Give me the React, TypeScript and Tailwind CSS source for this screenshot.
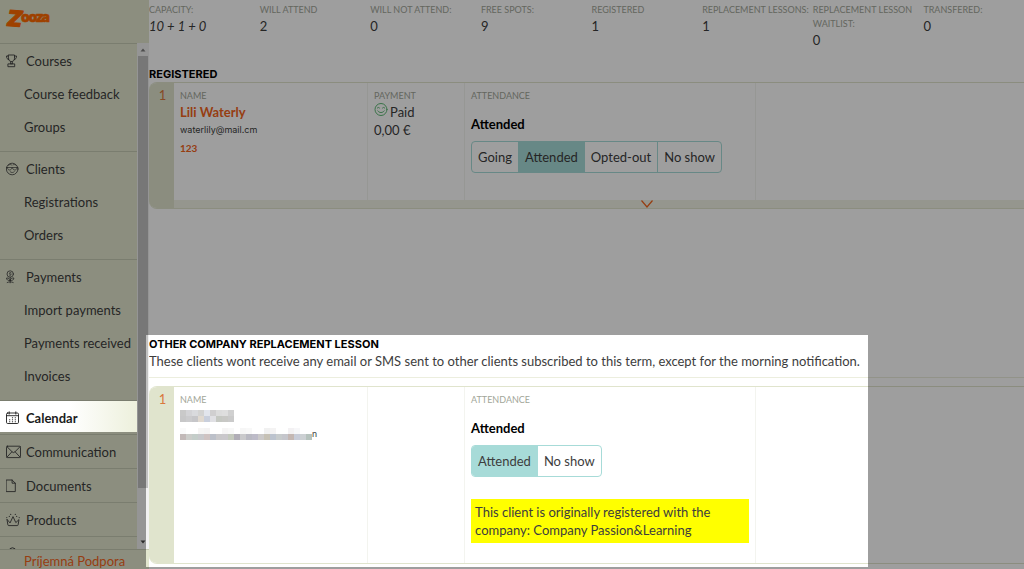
import type { ReactNode } from 'react';
import clsx from 'clsx';

const STATS = [
  { label: 'CAPACITY:', value: '10 + 1 + 0', italic: true },
  { label: 'WILL ATTEND', value: '2' },
  { label: 'WILL NOT ATTEND:', value: '0' },
  { label: 'FREE SPOTS:', value: '9' },
  { label: 'REGISTERED', value: '1' },
  { label: 'REPLACEMENT LESSONS:', value: '1' },
  { label: 'REPLACEMENT LESSON WAITLIST:', value: '0' },
  { label: 'TRANSFERED:', value: '0' },
];

const NAV_GROUPS = [
  { label: 'Courses', icon: <TrophyIcon />, items: ['Course feedback', 'Groups'] },
  { label: 'Clients', icon: <FaceIcon />, items: ['Registrations', 'Orders'] },
  { label: 'Payments', icon: <MoneyPlantIcon />, items: ['Import payments', 'Payments received', 'Invoices'] },
];

const NAV_LINKS = [
  { label: 'Communication', icon: <EnvelopeIcon /> },
  { label: 'Documents', icon: <PageIcon /> },
  { label: 'Products', icon: <CrownIcon /> },
];

// colours of the masked client name and e-mail, one per 6px block
const NAME_BLOCKS = [
  ['#c9c9c9', '#d3d3d6', '#d9dadd', '#d3d3d2', '#e2e5ec', '#d0cfd0', '#dcdcdc', '#dedede', '#d0d0d0'],
  ['#c7c7c8', '#cbcbcd', '#c6c6c9', '#e0d9d0', '#c9cfdc', '#e0e0e4', '#c5c8c2', '#c8c8c5', '#cacaca'],
];
const EMAIL_BLOCKS = [
  ['#fafafa', '#ffffff', '#ffffff', '#f6f5f4', '#f4f3f3', '#ffffff', '#ffffff', '#f6f5f5', '#f8f8f8', '#ffffff', '#f6f6f6', '#f8f8f8', '#ffffff', '#ffffff', '#f1f1f1', '#f4f3f3', '#ffffff', '#ffffff', '#f3f1f3', '#f7f7f9', '#ffffff', '#ffffff'],
  ['#c2b9b8', '#cccdca', '#c4cdc9', '#c8c9cc', '#cfc3c2', '#bcc0c9', '#c9c8ca', '#cac8cc', '#c4c9bd', '#b0adb6', '#c9c9cb', '#b9b9c2', '#bdbbc8', '#cbc9c9', '#c6c1b5', '#bcc3ce', '#c7cbcc', '#c5c6cc', '#c4b7b3', '#c8ccd8', '#ccd0d3', '#b6c2bd'],
];

function Icon({ children }: { children: ReactNode }) {
  return (
    <svg viewBox="0 0 16 16" className="h-4 w-4 shrink-0" fill="none" stroke="currentColor" strokeLinecap="round" strokeLinejoin="round" aria-hidden="true">
      {children}
    </svg>
  );
}

function TrophyIcon() {
  return (
    <Icon>
      <path d="M2.500 2h6v3.200c0 2-1 3.300-3 3.300s-3-1.300-3-3.300zM2.500 3H.5c0 2.200.8 3.400 2.300 3.700M8.500 3h2c0 2.200-.8 3.400-2.300 3.700M4.900 8.500l-.5 2.300h2.200l-.5-2.300M2.300 10.900h6.400v2.800H2.300z" strokeWidth=".9" />
    </Icon>
  );
}

function FaceIcon() {
  return (
    <Icon>
      <circle cx="6.200" cy="8" r="5.800" strokeWidth=".8" />
      <path d="M.5 6.500h11.400M1.400 6.600c.2 1.700 1 2.400 2.200 2.400s2-.8 2.200-2.200h.8C6.800 8.200 7.600 9 8.800 9s2-.7 2.200-2.400M4.100 10.700c1.200 1.200 3 1.200 4.200 0M2.400 4.200c1-.8 2-.9 3.100-.3M6.900 3.900c1.100-.6 2.100-.5 3.100.3" strokeWidth=".7" />
    </Icon>
  );
}

function MoneyPlantIcon() {
  return (
    <Icon>
      <circle cx="4.200" cy="5" r="3.200" strokeWidth=".8" />
      <path d="M5.100 3.800c-.8-.5-1.700-.2-1.700.4 0 .8 1.700.6 1.700 1.500 0 .7-1.100.8-1.800.3M4.200 8.200v5.600M4.200 11.400C4 9.600 2.600 8.800.5 9c.2 2 1.500 2.800 3.700 2.400zM4.200 11.400C4.400 9.600 5.800 8.800 7.900 9c-.2 2-1.500 2.800-3.700 2.400zM1.200 13.500c2-.9 4-.9 6 0" strokeWidth=".8" />
    </Icon>
  );
}

function CalendarIcon() {
  return (
    <Icon>
      <rect x=".5" y="3" width="12" height="10.500" rx="1.200" strokeWidth=".9" />
      <path d="M.5 5.700h12M3.200 1.800v2.300M9.800 1.800v2.300" strokeWidth=".9" />
      <path d="M6.400 7.800h.2M9.200 7.800h.2M3.600 9.800h.2M6.400 9.800h.2M9.200 9.800h.2M3.600 11.700h.2M6.400 11.700h.2M9.200 11.700h.2" strokeWidth="1.100" />
    </Icon>
  );
}

function EnvelopeIcon() {
  return (
    <Icon>
      <rect x=".5" y="2.200" width="14" height="11.400" rx="1" strokeWidth=".9" />
      <path d="M.9 2.600l5.600 5.600c.6.600 1.500.6 2.100 0L14.100 2.600M.9 13.200l5-5.400M14.100 13.200l-5-5.400" strokeWidth=".9" />
    </Icon>
  );
}

function PageIcon() {
  return (
    <Icon>
      <path d="M.5 2h5.600l3.200 3.200V13.600H.5zM6.100 2v3.200h3.200" strokeWidth=".9" />
    </Icon>
  );
}

function CrownIcon() {
  return (
    <Icon>
      <path d="M1 7.600l.9 5.300c.1.500.4.7.9.700h8.400c.5 0 .8-.2.9-.7l.9-5.300-3.200 3-2.800-6-2.800 6z" strokeWidth=".9" />
      <path d="M.8 5.500v.1M3.300 4.400v.1M4.700 2.300v.1M9.300 2.300v.1M10.700 4.400v.1M13.200 5.500v.1" strokeWidth="1.100" />
    </Icon>
  );
}

function PersonIcon() {
  return (
    <Icon>
      <circle cx="6.500" cy="5" r="3.200" />
      <path d="M1.500 14c.4-3 2.200-5 5-5s4.600 2 5 5" />
    </Icon>
  );
}

function Logo() {
  return (
    <svg viewBox="0 0 52 28" className="h-7 w-[52px]" fill="#ff6a00" stroke="#ff6a00" strokeLinejoin="round" role="img" aria-label="Zooza">
      <g fontFamily="Inter, sans-serif" fontWeight="900">
        <text x="3" y="20" fontSize="22" fontStyle="italic" strokeWidth="1" transform="rotate(4 8 12)">Z</text>
        <text x="17 24.500 31.500 37.500" y="16" fontSize="14" strokeWidth=".5">ooza</text>
      </g>
    </svg>
  );
}

function SmileIcon() {
  return (
    <svg viewBox="0 0 14 14" className="h-3.5 w-3.5" fill="none" stroke="#5cb874" strokeLinecap="round" aria-hidden="true">
      <circle cx="7" cy="6.500" r="6" />
      <path d="M3.300 4.900q1-1.200 2.200 0M8.500 4.900q1-1.200 2.200 0M3.800 7.900c1.500 2.300 4.900 2.300 6.400 0" />
    </svg>
  );
}

function Mosaic({ rows, label }: { rows: string[][]; label: string }) {
  return (
    <svg width={rows[0].length * 6} height={rows.length * 6} shapeRendering="crispEdges" role="img" aria-label={label}>
      {rows.map((row, r) =>
        row.map((color, c) => <rect key={`${r}-${c}`} x={c * 6} y={r * 6} width="6" height="6" fill={color} />),
      )}
    </svg>
  );
}

function Sidebar() {
  return (
    <aside className="flex h-screen w-[149px] shrink-0 flex-col overflow-hidden bg-[#e2e6ce]">
      <a href="#" className="flex h-[43px] shrink-0 items-start pt-1.5 pl-1">
        <Logo />
      </a>
      <div className="flex min-h-0 flex-1">
        <nav className="min-w-0 flex-1 overflow-hidden">
          {NAV_GROUPS.map((group) => (
            <div key={group.label} className="border-t border-[#c6cab3] pb-2">
              <a href="#" className="flex h-[33px] items-center gap-1 pl-1.5">
                {group.icon}
                {group.label}
              </a>
              {group.items.map((item) => (
                <a key={item} href="#" className="flex h-[33px] items-center pl-6 whitespace-nowrap">
                  {item}
                </a>
              ))}
            </div>
          ))}
          <div className="border-t border-[#c6cab3] pb-0.5">
            <a
              href="#"
              aria-current="page"
              className="relative z-20 flex h-[31px] items-center gap-1 bg-linear-to-r from-white from-50% to-[#edf0dc] pt-0.5 pl-1.5 font-bold text-[#1c1c1c]"
            >
              <CalendarIcon />
              Calendar
            </a>
          </div>
          {NAV_LINKS.map((link) => (
            <a key={link.label} href="#" className="flex h-[34px] items-center gap-1 border-t border-[#c6cab3] pl-1.5">
              {link.icon}
              {link.label}
            </a>
          ))}
          <a href="#" aria-label="Account" className="flex h-[34px] items-center border-t border-[#c6cab3] pl-1.5">
            <PersonIcon />
          </a>
        </nav>
        <div className="flex w-3 shrink-0 flex-col items-center bg-[#f1f1f1]" aria-hidden="true">
          <svg viewBox="0 0 12 13" className="h-[13px] w-3 shrink-0" fill="#7d7d7d">
            <path d="M3.500 8.500L6 5.500l2.500 3z" />
          </svg>
          <div className="w-2.5 flex-1 bg-[#c1c1c1]" />
          <div className="h-12" />
          <svg viewBox="0 0 12 13" className="h-[13px] w-3 shrink-0" fill="#454545">
            <path d="M3.500 4.500L6 7.500l2.500-3z" />
          </svg>
        </div>
      </div>
      <a href="#" className="h-5 shrink-0 border-t border-[#c6cab3] pt-[3px] pl-6 leading-4 whitespace-nowrap text-[#f2641c]">
        Príjemná Podpora
      </a>
    </aside>
  );
}

function SectionTitle({ children }: { children: ReactNode }) {
  return <h2 className="font-[Inter,sans-serif] text-[11px] leading-4 font-bold text-black">{children}</h2>;
}

function CellLabel({ children }: { children: ReactNode }) {
  return <p className="text-[9px] leading-[14px] text-[#a2a699]">{children}</p>;
}

function Segments({ options, active }: { options: string[]; active: string }) {
  return (
    <div className="mt-2 inline-flex h-8 divide-x divide-[#a7dbd8] overflow-hidden rounded border border-[#a7dbd8]">
      {options.map((option) => (
        <button
          key={option}
          type="button"
          aria-pressed={option === active}
          className={clsx('px-1.5', option === active && 'bg-[#a7dbd8]')}
        >
          {option}
        </button>
      ))}
    </div>
  );
}

function ClientCard({ number, name, payment, attendance, footer }: {
  number: number;
  name: ReactNode;
  payment?: ReactNode;
  attendance: ReactNode;
  footer?: ReactNode;
}) {
  return (
    <article className="-mr-24 flex overflow-hidden rounded-lg border-y border-[#e0e4cd]">
      <div className="w-[25px] shrink-0 bg-[#e0e4cd] pt-[3px] pl-0.5 text-center leading-[18px] text-[#d9783c]">{number}</div>
      <div className="flex flex-1 flex-col">
        <div className="grid flex-1 grid-cols-[8fr_4fr_12fr_15fr] divide-x divide-[#f3f4ef] *:min-w-0 *:px-1.5 *:pt-[6px]">
          <div>
            <CellLabel>NAME</CellLabel>
            {name}
          </div>
          <div>{payment}</div>
          <div>
            <CellLabel>ATTENDANCE</CellLabel>
            <p className="mt-3 leading-[18px] font-bold text-black">Attended</p>
            {attendance}
          </div>
          <div />
        </div>
        {footer}
      </div>
    </article>
  );
}

export default function App() {
  return (
    <div className="relative flex min-h-screen overflow-hidden bg-white font-[Lato,sans-serif] text-[13px] leading-[18px] text-[#3d3d3d]">
      <Sidebar />

      <main className="min-w-0 flex-1 overflow-hidden pt-[3px]">
        <dl className="-mr-2.5 grid min-h-[63px] grid-cols-8">
          {STATS.map((stat) => (
            <div key={stat.label}>
              <dt className="text-[9px] leading-[14px] text-[#a2a699]">{stat.label}</dt>
              <dd className={clsx(stat.italic && 'italic')}>{stat.value}</dd>
            </div>
          ))}
        </dl>

        <section>
          <SectionTitle>REGISTERED</SectionTitle>
          <ClientCard
            number={1}
            name={
              <>
                <a href="#" className="block font-bold text-[#f2641c]">Lili Waterly</a>
                <p className="font-[Inter,sans-serif] text-[9px] leading-[18px]">waterlily@mail.cm</p>
                <a href="#" className="block text-[10px] leading-[18px] font-bold text-[#f2641c]">123</a>
              </>
            }
            payment={
              <>
                <CellLabel>PAYMENT</CellLabel>
                <p className="flex gap-0.5">
                  <SmileIcon />
                  Paid
                </p>
                <p>0,00 €</p>
              </>
            }
            attendance={
              <div className="pb-[27px]">
                <Segments options={['Going', 'Attended', 'Opted-out', 'No show']} active="Attended" />
              </div>
            }
            footer={
              <button type="button" aria-label="Show details" className="flex h-2 w-full items-center justify-center bg-[#f0f2e6]">
                <svg viewBox="0 0 14 8" className="h-2 w-3.5" fill="none" stroke="#f2641c" strokeWidth="1.200" aria-hidden="true">
                  <path d="M1.500.5L7 7l5.500-6.500" />
                </svg>
              </button>
            }
          />
        </section>

        <section className="mt-[127px]">
          <SectionTitle>OTHER COMPANY REPLACEMENT LESSON</SectionTitle>
          <p className="pb-[7px] whitespace-nowrap">
            These clients wont receive any email or SMS sent to other clients subscribed to this term, except for the morning notification.
          </p>
          <div className="mb-2 border-t border-[#eceede]" />
          <ClientCard
            number={1}
            name={
              <>
                <div className="flex h-[18px] items-center">
                  <Mosaic rows={NAME_BLOCKS} label="Hidden client name" />
                </div>
                <div className="flex h-[18px] items-center text-[9px] leading-3">
                  <Mosaic rows={EMAIL_BLOCKS} label="Hidden e-mail" />
                  n
                </div>
              </>
            }
            attendance={
              <>
                <Segments options={['Attended', 'No show']} active="Attended" />
                <p className="mt-[22px] mb-5 bg-[#ffff00] p-1">
                  This client is originally registered with the company: Company Passion&amp;Learning
                </p>
              </>
            }
          />
        </section>
      </main>

      {/* spotlight: the shadow dims everything outside the box */}
      <div className="pointer-events-none absolute top-[335px] left-[146px] z-10 h-[232px] w-[722px] shadow-[0_0_0_2000px_rgba(0,0,0,0.38)]" />
    </div>
  );
}
